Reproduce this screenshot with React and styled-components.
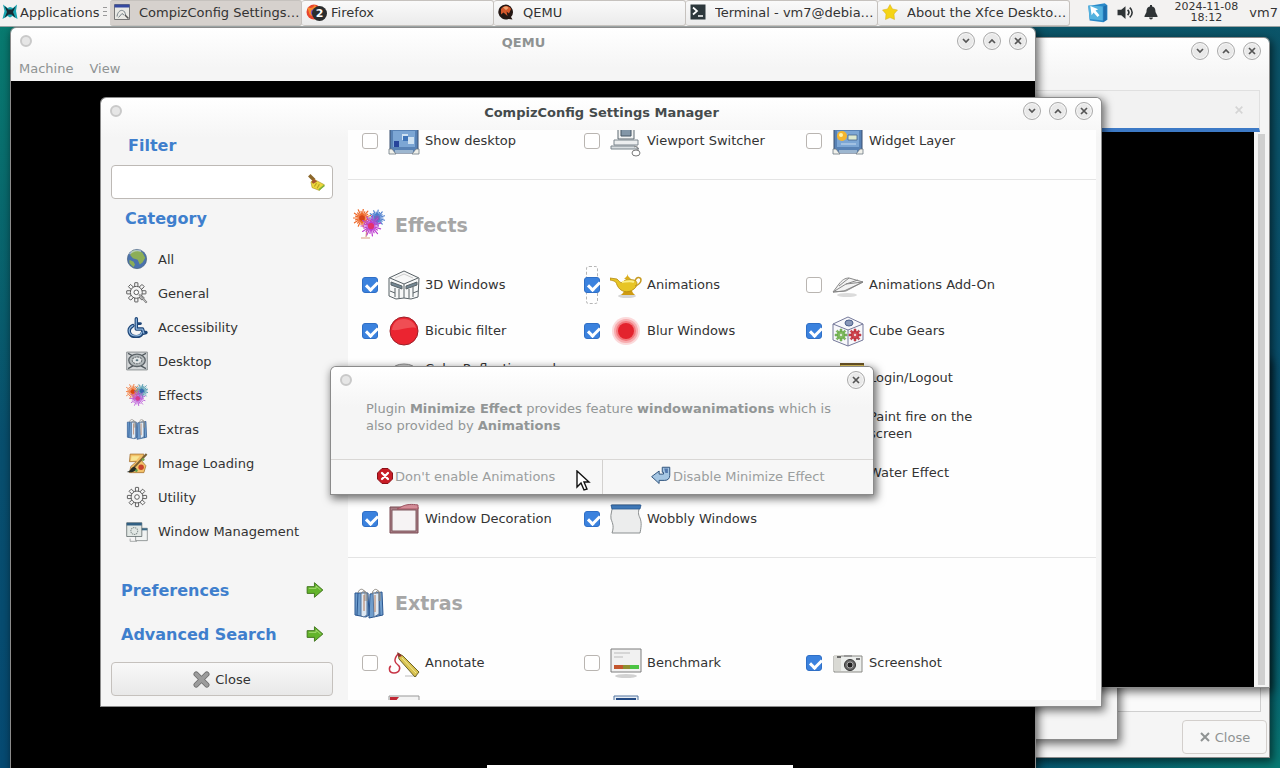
import React, { useState } from "react";
import styled, { createGlobalStyle } from "styled-components";

const GlobalStyle = createGlobalStyle`
  * {
    box-sizing: border-box;
  }
  body {
    margin: 0;
    overflow: hidden;
    color: #333;
    font: 13px/17px "DejaVu Sans", sans-serif;
  }
  button,
  input {
    font: inherit;
    color: inherit;
  }
`;

/* ---------- icons ---------- */

const Svg = ({ size = 32, box = 32, children }) => (
  <svg width={size} height={size} viewBox={`0 0 ${box} ${box}`} fill="none" aria-hidden="true">
    {children}
  </svg>
);

const Burst = ({ x, y, r, color, core, rays = 22 }) => (
  <g stroke={color} strokeWidth="1.2" strokeLinecap="round">
    {Array.from({ length: rays }, (_, i) => {
      const a = (i * 2 * Math.PI) / rays;
      const len = i % 2 ? r : r * 0.75;
      return <path key={i} d={`M${x} ${y}L${x + Math.cos(a) * len} ${y + Math.sin(a) * len}`} />;
    })}
    <circle cx={x} cy={y} r={r / 4} fill={core} stroke={core} />
  </g>
);

const Gear = ({ x, y, r, color = "#4d4d4d", fill = "#f4f4f4" }) => (
  <g stroke={color} strokeWidth={r / 11}>
    {Array.from({ length: 8 }, (_, i) => (
      <rect
        key={i}
        x={x - r / 6}
        y={y - r}
        width={r / 3}
        height={r / 2}
        rx="0.5"
        fill={fill}
        transform={`rotate(${i * 45} ${x} ${y})`}
      />
    ))}
    <circle cx={x} cy={y} r={r * 0.62} fill={fill} />
    <circle cx={x} cy={y} r={r * 0.24} fill="#fff" />
  </g>
);

const BagsArt = () => (
  <g strokeLinejoin="round">
    <path d="M2 6h13l1 22-3 2L2 28zM17 7l12-2 1 23-14 3z" fill="#6f9dcc" stroke="#2a5690" />
    <path d="M5 6l-1 22M26 6l1 23" stroke="#2a5690" />
    <path d="M8 6h6v22l-3 2-3-1zM20 6h6v21l-5 3z" fill="#dfe9f3" stroke="#55749b" />
    <path d="M5 6c1-5 6-5 7 0v8M8 7c2-5 6-3 6 1v6M19 7c1-6 6-6 7-1v8M22 7c1-4 5-4 5 0v7" stroke="#8f8a83" />
    <path d="M11 8v16M22 8v17" stroke="#b87d5a" />
  </g>
);

const ScreenArt = ({ sun }) => (
  <g>
    <path d="M2 2h28v26H2z" fill="#5882b5" stroke="#384f6e" />
    <path d="M7 25h18v3H7z" fill="#9db6cf" />
    <path d="M1 29v-5h3l4 5zM31 29v-5h-3l-4 5z" fill="#f0f0ea" stroke="#6d7884" strokeWidth="0.8" />
    <path d="M5 6h22v16H5z" fill="#7ca6d4" />
    {sun ? (
      <>
        <circle cx="10" cy="11" r="5" fill="#f5b52e" />
        <circle cx="9" cy="10" r="2" fill="#fff2a8" />
        <path d="M16 10h9v5h-9z" fill="#dde9cf" stroke="#46668a" strokeWidth="0.8" />
        <path d="M9 19h15" stroke="#c8dcf0" />
      </>
    ) : (
      <>
        <path d="M14 9h6v6h-6zM20 12h6v7h-6z" fill="#cfe2f2" />
        <path d="M6 16h5v6H6z" fill="#27449b" />
        <path d="M15 11h5v5h-5z" fill="#3f74b8" />
      </>
    )}
  </g>
);

const art = {
  all: (
    <>
      <circle cx="16" cy="16" r="14" fill="#4a72ae" stroke="#48617d" />
      <path d="M9 4c6-2 12 0 15 3l4 7-4 7-4 3-3-7-7-2-4-5z" fill="#8cae57" />
      <path d="M5 17l6 3 2 4-2 4-6-6z" fill="#8cae57" />
      <path d="M5 9c4-5 12-7 17-4" stroke="#d7e5ee" strokeWidth="2" opacity="0.6" />
    </>
  ),
  general: (
    <>
      <Gear x={15} y={15} r={14} />
      <path d="M19 18l11 12" stroke="#777" strokeWidth="3" />
      <path d="M19 18l10 11" stroke="#eee" />
    </>
  ),
  access: (
    <g strokeLinejoin="round" strokeLinecap="round">
      <path d="M15 4v15h9l2 6 3-1" stroke="#1d4577" strokeWidth="5" />
      <path d="M10 14C1 19 4 30 15 30c5 0 8-3 9-6" stroke="#1d4577" strokeWidth="5" />
      <path d="M15 11h6" stroke="#1d4577" strokeWidth="4" />
      <path d="M15 4v15h9l2 6M10 14C1 19 4 29 15 29c4 0 7-2 8-5" stroke="#8db4dc" strokeWidth="1.8" />
    </g>
  ),
  desktop: (
    <>
      <path d="M1 3h30v26H1z" fill="#d3d6d8" stroke="#686d70" />
      <ellipse cx="16" cy="15" rx="12" ry="9" fill="#b4babc" stroke="#5c6368" strokeWidth="2" />
      <path d="M3 5l6 3M29 5l-6 3M3 27l7-4M29 27l-7-4" stroke="#50585d" strokeWidth="2" />
      <ellipse cx="16" cy="15" rx="7" ry="5" fill="#e2e5e6" stroke="#6b7276" strokeDasharray="3 1" strokeWidth="1.5" />
      <ellipse cx="16" cy="15" rx="2" ry="1.5" fill="#59747f" />
    </>
  ),
  effects: (
    <>
      <path d="M14 19l-1 9M8 29h9" stroke="#d69a7e" strokeWidth="1.2" />
      <Burst x={9} y={9} r={9} color="#ee6a2b" core="#d64518" />
      <Burst x={24} y={9} r={8} color="#4d7fce" core="#7b62bd" />
      <Burst x={18} y={17} r={10} color="#bd3fd0" core="#e2336e" />
    </>
  ),
  effectsSmall: (
    <>
      <Burst x={10} y={11} r={11} color="#f0702c" core="#d9480f" />
      <Burst x={23} y={10} r={10} color="#3f90a8" core="#3767b0" />
      <Burst x={17} y={21} r={11} color="#b548d6" core="#d63b8c" />
    </>
  ),
  extras: <BagsArt />,
  image: (
    <>
      <path d="M6 3h20l-3 10 6 7-3 10H5l2-9 8-7H5z" fill="#f3c169" stroke="#9a6424" />
      <path d="M8 6h12l-5 6-8 1z" fill="#f7e493" />
      <path d="M30 3L12 22" stroke="#7a6034" strokeWidth="3" />
      <path d="M12 21l4 4c-5 5-10 5-15 4 6-1 6-7 11-8z" fill="#262b25" />
      <circle cx="22" cy="22" r="4" fill="#c9432c" />
      <circle cx="25" cy="11" r="2" fill="#73a548" />
      <circle cx="15" cy="27" r="2" fill="#5b9c50" />
    </>
  ),
  utility: <Gear x={16} y={16} r={14} />,
  windows: (
    <>
      <path d="M14 12h17v18H14z" fill="#f1f3f2" stroke="#6d7474" />
      <path d="M14 12h17v3H14z" fill="#3c6a87" />
      <path d="M1 4h22v20H1z" fill="#e1e7e4" stroke="#4c5759" />
      <path d="M1 4h22v4H1z" fill="#305f83" />
      <circle cx="12" cy="16" r="5" stroke="#85908f" strokeDasharray="2 1" strokeWidth="1.5" />
      <path d="M6 27v4h10" stroke="#858b8b" />
    </>
  ),
  showDesktop: <ScreenArt />,
  widget: <ScreenArt sun />,
  viewport: (
    <>
      <path d="M8 2h16v12H8z" fill="#f1f2f2" stroke="#5d6970" />
      <path d="M11 4h10v7H11z" fill="#8396a7" stroke="#465765" />
      <path d="M4 15h24v5H4z" fill="#eceeef" stroke="#7b858c" />
      <path d="M1 21h24l4 3H1z" fill="#d8dde0" stroke="#7b858c" />
      <path d="M24 22c4-2 5 1 2 4" stroke="#888" />
      <ellipse cx="26" cy="28" rx="4" ry="3" fill="#fff" stroke="#777" />
    </>
  ),
  cube3d: (
    <g stroke="#596267" strokeLinejoin="round">
      <path d="M1 9L16 2l15 7-1 19-7 2-7-1-8 1-7-3z" fill="#f7f8f8" />
      <path d="M2 9l14 6 14-6M16 15v14" />
      <path d="M3 13l11 4v3L3 16zM18 17l11-4v3l-11 4z" fill="#738793" />
      <path d="M7 19v9M11 20v9M21 20v9M25 18v10M2 22l5 2M25 24l5-2" />
      <path d="M7 9l9-4 9 4" stroke="#ccc" />
    </g>
  ),
  lamp: (
    <>
      <ellipse cx="17" cy="27" rx="9" ry="2" fill="#bbb" opacity="0.6" />
      <path d="M13 24l2-4h6l2 4 2 2H11z" fill="#cf9b12" />
      <path
        d="M0 9l7 1c3 3 4 5 7 2l3-2 7 1c4 1 4 6 0 9-6 5-14 3-17-4-1-4-3-4-7-5z"
        fill="#e7c526"
        stroke="#b48912"
        strokeWidth="0.8"
      />
      <path d="M25 12c2-6 6-3 6-1s-2 5-6 6" stroke="#c69a20" strokeWidth="1.5" />
      <path d="M17 5l1 2 3 3h-7l3-3z" fill="#dbae1c" />
      <path d="M12 13c3 0 8-2 12 0" stroke="#fbef8b" strokeWidth="2" />
    </>
  ),
  plane: (
    <>
      <ellipse cx="15" cy="26" rx="10" ry="2" fill="#ccc" opacity="0.7" />
      <path d="M1 23l6-8c3-4 6-6 10-6l14 4-19 9z" fill="#f2f2f2" stroke="#898989" strokeLinejoin="round" />
      <path d="M1 23l13-8 17-2-17 9zM7 17l10-8M14 15l12-4" stroke="#888" strokeLinejoin="round" />
    </>
  ),
  red: (
    <>
      <circle cx="16" cy="16" r="14" fill="#eb2430" stroke="#9c1f28" />
      <path d="M4 15C5 7 10 4 16 4s11 4 12 9c-8-2-15 3-24 2z" fill="#f46b6d" opacity="0.6" />
    </>
  ),
  blur: (
    <>
      <circle cx="16" cy="16" r="14" fill="#f0454c" opacity="0.2" />
      <circle cx="16" cy="16" r="12" fill="#f0454c" opacity="0.3" />
      <circle cx="16" cy="16" r="10" fill="#f0454c" opacity="0.5" />
      <circle cx="16" cy="16" r="8" fill="#e3232d" />
    </>
  ),
  cubeGears: (
    <g strokeLinejoin="round">
      <path d="M1 9L16 2l15 7v16l-15 6-15-6z" fill="#f8f8fb" stroke="#75799a" />
      <path d="M1 9l15 6 15-6M16 15v16" stroke="#75799a" />
      <ellipse cx="17" cy="8" rx="4" ry="3" fill="#8998b8" stroke="#4b5f8b" />
      <Gear x={9} y={20} r={6} color="#5c9b42" fill="#7fbc5b" />
      <Gear x={23} y={20} r={6} color="#a52432" fill="#d5434b" />
    </g>
  ),
  reflection: (
    <>
      <ellipse cx="16" cy="8" rx="12" ry="6" fill="#ccc" stroke="#888" />
      <path d="M4 8v14l12 7 12-7V8" fill="#e8ecef" stroke="#888" />
    </>
  ),
  fading: <path d="M3 7h26v20H3z" fill="#eee" stroke="#bbb" />,
  door: (
    <>
      <path d="M8 1h24v31H8z" fill="#d8b53c" />
      <path d="M8 1h24v2H8z" fill="#6b5426" />
      <path d="M9 4h22" stroke="#f0dc82" />
    </>
  ),
  frame: (
    <>
      <path d="M2 4h28v26H2z" fill="#a87d84" stroke="#7a4c54" />
      <path d="M13 4c5-3 11-3 17-2v4H9z" fill="#d78e99" stroke="#a35563" />
      <path d="M4 7h24v21H4z" fill="#f6f3f4" stroke="#805a61" />
    </>
  ),
  wobbly: (
    <>
      <path d="M2 2h28c-2 7-2 9 0 13 2 5 1 10 0 15H2c2-6 1-9-1-14C0 11 3 7 2 2z" fill="#eceded" stroke="#8b8f90" />
      <path d="M1 2h30l-1 4H2z" fill="#3f79b9" stroke="#285890" strokeWidth="0.8" />
    </>
  ),
  pencil: (
    <>
      <path d="M17 29h12" stroke="#ddd" strokeWidth="2" />
      <path d="M10 7C5 13 7 16 10 18s2 8-4 8-5-6-3-7" stroke="#c73546" strokeWidth="1.5" />
      <path d="M10 6l5 3 16 16-4 5L11 12z" fill="#d9c351" stroke="#6c6228" strokeLinejoin="round" />
      <path d="M14 11l14 15" stroke="#f0e79b" />
      <path d="M9 5l5 4-3 1z" fill="#962331" />
    </>
  ),
  bench: (
    <>
      <ellipse cx="16" cy="29" rx="11" ry="2" fill="#bdbdbd" opacity="0.7" />
      <path d="M1 2h30v23H1z" fill="#f1f1f1" stroke="#7d7d7d" />
      <path d="M4 6h16M4 10h9" stroke="#bbb" />
      <path d="M4 18h9v4H4z" fill="#c3562d" />
      <path d="M13 18h7v4h-7z" fill="#8f8f30" />
      <path d="M20 18h9v4h-9z" fill="#4cc444" />
    </>
  ),
  camera: (
    <>
      <path d="M2 9h28v16H2z" fill="#eceeec" stroke="#8a8a85" />
      <path d="M2 8h7v16H2z" fill="#d9d9d4" />
      <path d="M5 10h4M24 12h4" stroke="#444" strokeWidth="1.5" />
      <path d="M12 9h8" stroke="#999" strokeWidth="2" />
      <circle cx="18" cy="18" r="5.5" fill="#696969" stroke="#333" />
      <circle cx="18" cy="18" r="3" fill="#222" stroke="#aaa" />
    </>
  ),
  splash: (
    <>
      <path d="M1 3h30v27H1z" fill="#f3f3f3" stroke="#999" />
      <path d="M2 4h9l-4 5H2z" fill="#c02734" />
    </>
  ),
  preview: (
    <>
      <path d="M4 3h24v27H4z" fill="#e7edf4" stroke="#52749f" />
      <path d="M7 6h18v20H7z" fill="#88a9d4" stroke="#234a84" strokeWidth="2" />
    </>
  ),
  broom: (
    <>
      <path d="M4 4l9 9" stroke="#8b672a" strokeWidth="6" />
      <path d="M12 11l6 3 13 7-9 10-13-5-2-10z" fill="#ecd63b" stroke="#a28d1c" />
      <path d="M21 30l10-8" stroke="#7eb23c" strokeWidth="3" />
      <path d="M17 18l-4 6M22 20l-4 7" stroke="#b9a321" strokeWidth="2" />
      <path d="M12 10l6 5-7 4-3-3z" fill="#a5542e" />
    </>
  ),
  arrow: (
    <>
      <path
        d="M2 10h13V3l15 13-15 13v-7H2z"
        fill="#63b42b"
        stroke="#3b6f19"
        strokeWidth="1.6"
        strokeLinejoin="round"
      />
      <path d="M5 13h13V9l8 7" stroke="#b0de7f" strokeWidth="1.6" />
    </>
  ),
  cross: (
    <>
      <path d="M6 6l20 20M26 6L6 26" stroke="#6e6e6e" strokeWidth="10" strokeLinecap="round" />
      <path d="M6 6l20 20M26 6L6 26" stroke="#9c9c9c" strokeWidth="7" strokeLinecap="round" />
    </>
  ),
  stop: (
    <>
      <path d="M10 1h12l9 9v12l-9 9H10l-9-9V10z" fill="#c81c25" stroke="#8a1018" strokeWidth="2" />
      <path d="M10 10l12 12M22 10L10 22" stroke="#fff" strokeWidth="4.5" strokeLinecap="round" />
    </>
  ),
  back: (
    <>
      <path
        d="M1 17l12-9v5h7v-3h-2V2h12v13c0 5-3 8-8 8h-9v5z"
        fill="#a5c6e3"
        stroke="#32567f"
        strokeWidth="1.6"
        strokeLinejoin="round"
      />
      <path d="M21 4h6v7h-4z" fill="#5479ad" />
    </>
  ),
  xfce: (
    <>
      <path d="M2 1l9 7 5-2 6 2 8-7-2 13 3 16-10-6-5 3-5-3-10 6 4-16z" fill="#17a3ae" />
      <path d="M5 4l8 7h7l7-6-5 11 5 12-8-7h-6l-8 7 5-12z" fill="#172a32" />
    </>
  ),
  ccsm: (
    <>
      <path d="M1 1h30v30H1z" fill="#e9e9e5" stroke="#777" strokeWidth="2" />
      <path d="M1 1h30v6H1z" fill="#3549a1" />
      <path d="M6 25c2-16 17-16 17-2M9 27l7-8 4 3" stroke="#78838a" strokeWidth="2" />
      <path d="M22 22l7 7" stroke="#555" strokeWidth="3" />
    </>
  ),
  firefox: (
    <>
      <circle cx="16" cy="16" r="15" fill="#e8452d" />
      <path d="M3 7c7 2 12 1 14-5 5 4 9 9 8 15-1 7-12 10-18 4z" fill="#f88b2c" />
      <circle cx="17" cy="17" r="7" fill="#7847bd" />
    </>
  ),
  qemu: (
    <>
      <path d="M16 1a15 15 0 1 0 5 29l8 1-3-5A15 15 0 0 0 16 1z" fill="#241713" />
      <path d="M6 10c5-8 16-8 20 0l-4 9-5-4 2 9-8-7-5 4z" fill="#d4582b" />
      <path d="M10 7c4-3 9-2 11 1l-5 4z" fill="#efa36f" />
    </>
  ),
  terminal: (
    <>
      <path d="M1 1h30v30H1z" fill="#2d383c" />
      <path d="M6 7l8 7-8 7M16 24h10" stroke="#fff" strokeWidth="3.4" />
    </>
  ),
  star: <path d="M16 1l5 9 10 2-7 8 1 11-9-4-9 4 1-11-7-8 10-2z" fill="#f5d415" stroke="#d7ad1b" />,
  pointer: (
    <>
      <path d="M2 6l25-4 4 3v22l-6 4-21-3z" fill="#2989c9" />
      <path d="M2 5l22 2v21L4 26z" fill="#54b2df" />
      <path d="M5 6l12 5-4 2 6 7-3 3-6-7-3 4z" fill="#fff" />
      <path d="M25 7l5-2v22l-5 3z" fill="#1f6ead" />
    </>
  ),
  speaker: (
    <>
      <path d="M1 11h7l8-7v24l-8-7H1z" fill="#2f3436" />
      <path d="M20 11c3 3 3 7 0 10M24 7c6 5 6 13 0 18" stroke="#2f3436" strokeWidth="3" />
    </>
  ),
  bell: <path d="M14 2h4v3c6 1 7 6 7 11l4 8v2H3v-2l4-8c0-5 1-10 7-11zM12 27h8c-1 5-7 5-8 0z" fill="#2f3436" />,
};

const Icon = ({ name, size }) => <Svg size={size}>{art[name]}</Svg>;

/* ---------- panel ---------- */

const Screen = styled.div`
  display: flex;
  flex-direction: column;
  height: 100vh;
  background:
    radial-gradient(ellipse at 0 0, #087d70 0, #087d7000 40%),
    radial-gradient(ellipse at 100% 100%, #087a73 0, #087a7300 20%),
    linear-gradient(#0b5568, #064a72);
`;

const Panel = styled.header`
  display: flex;
  align-items: stretch;
  height: 27px;
  padding-right: 2px;
  background: #f3f2f1;
  border-bottom: 1px solid #9ba3a3;
`;

const AppsButton = styled.button`
  display: flex;
  align-items: center;
  flex: none;
  gap: 2px;
  width: 110px;
  padding: 0 0 2px 2px;
  border: 0;
  background: none;
`;

const Grip = styled.span`
  width: 4px;
  height: 10px;
  margin-left: 2px;
  background: repeating-linear-gradient(#999 0 1px, transparent 1px 4px);
`;

const Task = styled.button`
  display: flex;
  align-items: center;
  flex: 0 1 192px;
  gap: 9px;
  min-width: 0;
  padding: 0 0 2px 4px;
  border: 1px solid #c6c2be;
  border-width: 1px 1px 1px 0;
  border-radius: 3px;
  background: ${({ $active }) => ($active ? "#d6d1cd" : "linear-gradient(#fafafa, #ebebeb)")};
  text-align: left;
`;

const TaskIcon = styled.span`
  position: relative;
  display: flex;
  flex: none;
`;

const TaskText = styled.span`
  overflow: hidden;
  text-overflow: ellipsis;
  white-space: nowrap;
`;

const Badge = styled.span`
  position: absolute;
  left: 6px;
  top: 2px;
  width: 15px;
  height: 15px;
  border-radius: 50%;
  background: #2b2d2e;
  color: #fff;
  font-size: 11px;
  font-weight: bold;
  line-height: 15px;
  text-align: center;
`;

const Tray = styled.div`
  display: flex;
  align-items: center;
  gap: 9px;
  margin-left: auto;
  padding-bottom: 2px;
`;

const Clock = styled.time`
  width: 68px;
  margin-left: 4px;
  font-size: 11px;
  line-height: 11px;
  text-align: center;
`;

/* ---------- windows ---------- */

const Workspace = styled.main`
  position: relative;
  flex: 1;
  overflow: hidden;
`;

const Frame = styled.section`
  position: absolute;
  left: ${({ $x }) => $x}px;
  top: ${({ $y }) => $y}px;
  width: ${({ $w }) => $w}px;
  height: ${({ $h }) => ($h ? `${$h}px` : "auto")};
  display: flex;
  flex-direction: column;
  overflow: hidden;
  border-radius: 5px 5px 0 0;
  background: linear-gradient(#fff, #f5f5f5 40px);
  box-shadow: 0 0 0 1px #8b8b8b, 2px 3px 8px 2px rgba(0, 0, 0, 0.55);
`;

const TitleBar = styled.div`
  display: grid;
  grid-template-columns: 1fr auto 1fr;
  align-items: center;
  flex: none;
  height: 26px;
  padding: 0 8px 0 9px;
`;

const Title = styled.h1`
  margin: 0;
  padding-top: 2px;
  font-size: 13px;
  color: ${({ $dim }) => ($dim ? "#8f9393" : "#454b4c")};
`;

const MenuDot = styled.button`
  width: 12px;
  height: 12px;
  padding: 0;
  border: 2px solid #c9c9c9;
  border-radius: 50%;
  background: #e6e6e6;
`;

const WindowButtons = styled.div`
  display: flex;
  justify-content: flex-end;
  gap: 8px;
`;

const RoundButton = styled.button`
  display: flex;
  align-items: center;
  justify-content: center;
  width: 18px;
  height: 18px;
  padding: 0;
  border: 1px solid #a9a9a9;
  border-radius: 50%;
  background: #e9e9e9;
  box-shadow: inset 0 0 0 1px #f7f7f7;
`;

const glyphs = {
  Minimize: "M3 4l3 3 3-3",
  Maximize: "M3 8l3-3 3 3",
  Close: "M3 3l6 6M9 3l-6 6",
};

const Bar = ({ title, dim, buttons = ["Minimize", "Maximize", "Close"] }) => (
  <TitleBar>
    <MenuDot aria-label="Window menu" />
    <Title $dim={dim}>{title}</Title>
    <WindowButtons>
      {buttons.map((b) => (
        <RoundButton key={b} aria-label={b}>
          <Svg size={12} box={12}>
            <path d={glyphs[b]} stroke="#555" strokeWidth="1.7" />
          </Svg>
        </RoundButton>
      ))}
    </WindowButtons>
  </TitleBar>
);

const MenuBar = styled.nav`
  display: flex;
  flex: none;
  height: 27px;
`;

const MenuItem = styled.button`
  padding: 1px 8px 0;
  border: 0;
  background: none;
  color: #8f9393;
`;

const Display = styled.div`
  display: flex;
  flex: 1;
  align-items: flex-end;
  background: #000;
`;

const GuestBar = styled.div`
  width: 306px;
  height: 3px;
  margin-left: 476px;
  background: #fff;
`;

const TabStrip = styled.div`
  display: flex;
  align-items: center;
  justify-content: flex-end;
  height: 42px;
  margin: 26px 9px 0 0;
  padding-right: 15px;
  border: 1px solid #e0e0e0;
  border-bottom: 4px solid #3d7ac6;
  background: #f2f2f2;
`;

const TerminalBody = styled.div`
  display: flex;
  flex: 1;
`;

const Scrollbar = styled.div`
  width: 15px;
  padding: 2px 4px;
  background: #f4f4f4;

  &::before {
    content: "";
    display: block;
    height: 100%;
    background: #cfcfcf;
  }
`;

const ListPane = styled.div`
  flex: 1;
  margin-right: 8px;
  border: 1px solid #cfcfcf;
  background: #fafafa;
`;

const Footer = styled.div`
  display: flex;
  justify-content: flex-end;
  padding: 8px 2px 3px;
`;

const FooterButton = styled.button`
  display: flex;
  align-items: center;
  justify-content: center;
  gap: 4px;
  width: 85px;
  height: 34px;
  border: 1px solid #d3cfcc;
  border-radius: 4px;
  background: #f7f7f7;
  color: #8f9393;
`;

/* ---------- settings manager ---------- */

const Body = styled.div`
  display: flex;
  flex: 1;
  min-height: 0;
  margin-top: 6px;
`;

const Sidebar = styled.aside`
  display: flex;
  flex-direction: column;
  flex: none;
  width: 247px;
  padding: 0 15px 10px 10px;
`;

const SideHeading = styled.label`
  padding: 7px 17px 10px;
  font-size: 16px;
  line-height: 18px;
  font-weight: bold;
  color: #3f7fcd;
`;

const CategoryHeading = styled.h2`
  margin: 0;
  padding: 11px 14px 14px;
  font-size: 16px;
  line-height: 18px;
  color: #3f7fcd;
`;

const FilterBox = styled.div`
  display: flex;
  align-items: center;
  height: 34px;
  padding-right: 7px;
  border: 1px solid #bdb9b5;
  border-radius: 4px;
  background: #fff;
`;

const FilterInput = styled.input`
  flex: 1;
  min-width: 0;
  height: 100%;
  padding: 0 8px;
  border: 0;
  outline: 0;
  background: none;
`;

const IconButton = styled.button`
  display: flex;
  padding: 0;
  border: 0;
  background: none;
`;

const Categories = styled.ul`
  flex: 1;
  margin: 0;
  padding: 0;
  list-style: none;
`;

const Category = styled.button`
  display: flex;
  align-items: center;
  gap: 10px;
  width: 100%;
  height: 34px;
  padding: 0 15px;
  border: 0;
  background: none;
`;

const SideLink = styled.button`
  display: flex;
  align-items: center;
  justify-content: space-between;
  height: 44px;
  padding: 0 9px 0 10px;
  border: 0;
  background: none;
  font-size: 16px;
  font-weight: bold;
  color: #3f7fcd;
`;

const CloseButton = styled.button`
  display: flex;
  align-items: center;
  justify-content: center;
  gap: 5px;
  height: 34px;
  margin-top: 6px;
  border: 1px solid #c5c1bd;
  border-radius: 4px;
  background: linear-gradient(#f8f8f8, #e8e8e8);
`;

const Plugins = styled.div`
  flex: 1;
  overflow: hidden;
  margin: 0 5px 6px 0;
  background: #fefefe;
`;

const Group = styled.section`
  padding-bottom: 15px;
  border-bottom: 1px solid #e4e4e4;

  &:first-child {
    margin-top: -12px;
  }
`;

const GroupTitle = styled.h2`
  display: flex;
  align-items: center;
  gap: 10px;
  height: 32px;
  margin: 29px 0 21px 5px;
  font-size: 19px;
  color: #a6a6a6;
`;

const Grid = styled.div`
  display: grid;
  grid-template-columns: repeat(auto-fill, 222px);
  grid-auto-rows: minmax(46px, auto);
  padding-left: 14px;
`;

const PluginRow = styled.label`
  display: flex;
  align-items: center;
  padding: 6px 0;
`;

const CheckHolder = styled.span`
  position: relative;
  display: flex;
  margin-right: 10px;

  &::before {
    content: "";
    display: ${({ $focused }) => ($focused ? "block" : "none")};
    position: absolute;
    inset: -11px 2px;
    border: 1px dashed #b5b5b5;
    border-radius: 3px;
  }
`;

const Check = styled.input.attrs({ type: "checkbox" })`
  appearance: none;
  position: relative;
  width: 16px;
  height: 16px;
  margin: 0;
  border: 1px solid #b9b5b1;
  border-radius: 3px;
  background: #fff;

  &:checked {
    border-color: #2f6fc6;
    background: #3b82de;
  }

  &:checked::after {
    content: "";
    position: absolute;
    left: 5px;
    top: 1px;
    width: 5px;
    height: 9px;
    border: solid #fff;
    border-width: 0 3px 3px 0;
    transform: rotate(45deg);
  }
`;

const PluginName = styled.span`
  width: 140px;
  margin-left: 5px;
  padding-bottom: 2px;
`;

/* ---------- conflict dialog ---------- */

const Message = styled.p`
  margin: 0;
  padding: 7px 30px 25px 35px;
  color: #929696;
`;

const Actions = styled.div`
  display: flex;
  border-top: 1px solid #d9d7d5;
`;

const Action = styled.button`
  display: flex;
  align-items: center;
  justify-content: center;
  flex: 1;
  gap: 2px;
  height: 34px;
  padding: 0 0 2px;
  border: 0;
  background: #f7f7f7;
  color: #9b9e9e;

  & + & {
    border-left: 1px solid #d3d1cf;
  }
`;

const Cursor = styled.div`
  position: absolute;
  left: 575px;
  top: 443px;
`;

const tasks = [
  ["ccsm", "CompizConfig Settings Manager"],
  ["firefox", "Firefox"],
  ["qemu", "QEMU"],
  ["terminal", "Terminal - vm7@debian: ~"],
  ["star", "About the Xfce Desktop Environment"],
];

const categories = [
  ["all", "All"],
  ["general", "General"],
  ["access", "Accessibility"],
  ["desktop", "Desktop"],
  ["effectsSmall", "Effects"],
  ["extras", "Extras"],
  ["image", "Image Loading"],
  ["utility", "Utility"],
  ["windows", "Window Management"],
];

const groups = [
  {
    plugins: [
      ["showDesktop", "Show desktop", false],
      ["viewport", "Viewport Switcher", false],
      ["widget", "Widget Layer", false],
    ],
  },
  {
    title: "Effects",
    icon: "effects",
    plugins: [
      ["cube3d", "3D Windows", true],
      ["lamp", "Animations", true],
      ["plane", "Animations Add-On", false],
      ["red", "Bicubic filter", true],
      ["blur", "Blur Windows", true],
      ["cubeGears", "Cube Gears", true],
      ["reflection", "Cube Reflection and Deformation", false],
      ["fading", "Fading Windows", false],
      ["door", "Login/Logout", false],
      ["frame", "Minimize Effect", true],
      ["blur", "Motion blur", false],
      ["red", "Paint fire on the screen", false],
      ["reflection", "Reflection", false],
      ["fading", "Trailfocus", false],
      ["blur", "Water Effect", false],
      ["frame", "Window Decoration", true],
      ["wobbly", "Wobbly Windows", true],
    ],
  },
  {
    title: "Extras",
    icon: "extras",
    plugins: [
      ["pencil", "Annotate", false],
      ["bench", "Benchmark", false],
      ["camera", "Screenshot", true],
      ["splash", "Splash", false],
      ["preview", "Window Previews", false],
    ],
  },
];

const Plugin = ({ icon, name, enabled }) => {
  const [checked, setChecked] = useState(enabled);

  return (
    <PluginRow>
      <CheckHolder $focused={name === "Animations"}>
        <Check checked={checked} onChange={() => setChecked(!checked)} />
      </CheckHolder>
      <Icon name={icon} size={32} />
      <PluginName>{name}</PluginName>
    </PluginRow>
  );
};

const SettingsManager = () => (
  <Frame $x={101} $y={71} $w={1000} $h={608}>
    <Bar title="CompizConfig Settings Manager" />
    <Body>
      <Sidebar>
        <SideHeading htmlFor="filter">Filter</SideHeading>
        <FilterBox>
          <FilterInput id="filter" />
          <IconButton aria-label="Clear">
            <Icon name="broom" size={18} />
          </IconButton>
        </FilterBox>
        <CategoryHeading>Category</CategoryHeading>
        <Categories>
          {categories.map(([icon, name]) => (
            <li key={name}>
              <Category>
                <Icon name={icon} size={22} />
                {name}
              </Category>
            </li>
          ))}
        </Categories>
        <SideLink>
          Preferences
          <Icon name="arrow" size={18} />
        </SideLink>
        <SideLink>
          Advanced Search
          <Icon name="arrow" size={18} />
        </SideLink>
        <CloseButton>
          <Icon name="cross" size={17} />
          Close
        </CloseButton>
      </Sidebar>
      <Plugins>
        {groups.map((group, i) => (
          <Group key={i}>
            {group.title && (
              <GroupTitle>
                <Icon name={group.icon} size={32} />
                {group.title}
              </GroupTitle>
            )}
            <Grid>
              {group.plugins.map(([icon, name, enabled]) => (
                <Plugin key={name} icon={icon} name={name} enabled={enabled} />
              ))}
            </Grid>
          </Group>
        ))}
      </Plugins>
    </Body>
  </Frame>
);

const App = () => (
  <>
    <GlobalStyle />
    <Screen>
      <Panel>
        <AppsButton>
          <Icon name="xfce" size={16} />
          Applications
          <Grip />
        </AppsButton>
        {tasks.map(([icon, name], i) => (
          <Task key={name} $active={i === 0}>
            <TaskIcon>
              <Icon name={icon} size={16} />
              {icon === "firefox" && <Badge>2</Badge>}
            </TaskIcon>
            <TaskText>{name}</TaskText>
          </Task>
        ))}
        <Tray>
          <Icon name="pointer" size={21} />
          <Icon name="speaker" size={17} />
          <Icon name="bell" size={16} />
          <Clock>
            2024-11-08
            <br />
            18:12
          </Clock>
          <span>vm7</span>
        </Tray>
      </Panel>
      <Workspace>
        <Frame $x={860} $y={330} $w={409} $h={400}>
          <ListPane />
          <Footer>
            <FooterButton>
              <Svg size={12} box={12}>
                <path d="M2 2l8 8M10 2l-8 8" stroke="#8f9393" strokeWidth="2" />
              </Svg>
              Close
            </FooterButton>
          </Footer>
        </Frame>
        <Frame $x={700} $y={400} $w={417} $h={312} />
        <Frame $x={760} $y={11} $w={509} $h={649}>
          <Bar dim />
          <TabStrip>
            <Svg size={10} box={12}>
              <path d="M2 2l8 8M10 2l-8 8" stroke="#d5d5d5" strokeWidth="2" />
            </Svg>
          </TabStrip>
          <TerminalBody>
            <Display />
            <Scrollbar />
          </TerminalBody>
        </Frame>
        <Frame $x={11} $y={1} $w={1024} $h={740}>
          <Bar title="QEMU" dim />
          <MenuBar>
            <MenuItem>Machine</MenuItem>
            <MenuItem>View</MenuItem>
          </MenuBar>
          <Display>
            <GuestBar />
          </Display>
        </Frame>
        <SettingsManager />
        <Frame as="div" role="dialog" aria-label="Plugin conflict" $x={331} $y={340} $w={542}>
          <Bar dim buttons={["Close"]} />
          <Message>
            Plugin <b>Minimize Effect</b> provides feature <b>windowanimations</b> which is also provided by{" "}
            <b>Animations</b>
          </Message>
          <Actions>
            <Action>
              <Icon name="stop" size={16} />
              Don't enable Animations
            </Action>
            <Action>
              <Icon name="back" size={20} />
              Disable Minimize Effect
            </Action>
          </Actions>
        </Frame>
        <Cursor>
          <Svg size={22} box={22}>
            <path d="M2 1v16l4-4 3 7 3-1-3-7h5z" fill="#fff" stroke="#111" strokeWidth="1.4" />
          </Svg>
        </Cursor>
      </Workspace>
    </Screen>
  </>
);

export default App;
